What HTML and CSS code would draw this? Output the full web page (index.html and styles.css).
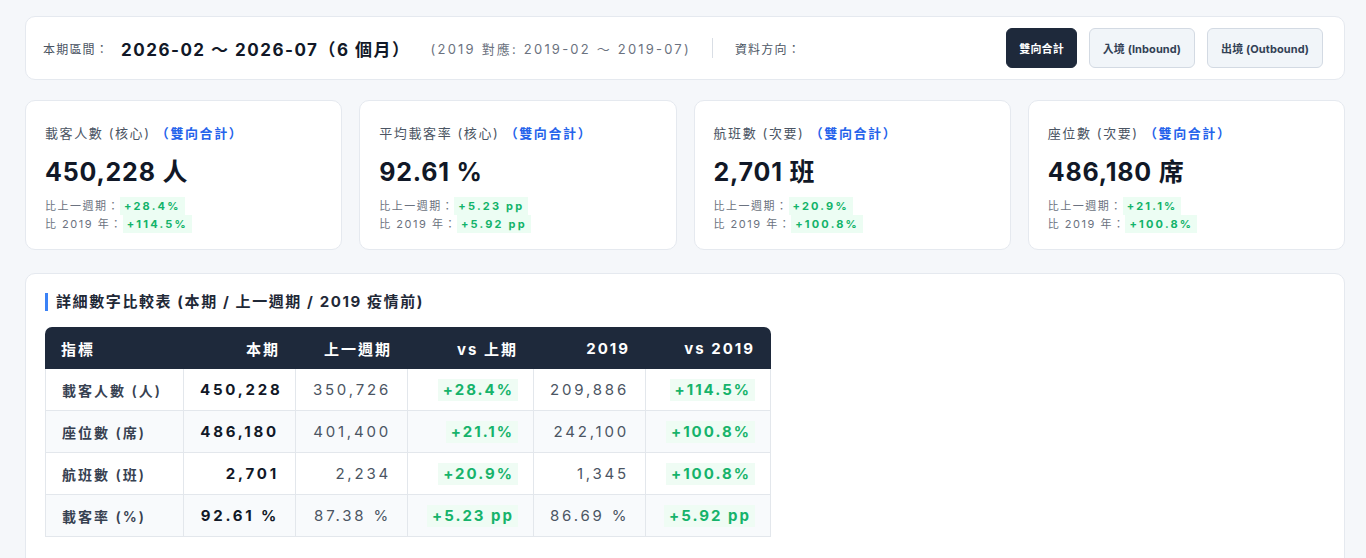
FILE: index.html
```
<!DOCTYPE html>
<html lang="zh-Hant">
<head>
<meta charset="utf-8">
<link rel="stylesheet" href="styles.css">
</head>
<body>
<div class="page">
  <div class="card topbar">
    <span class="lbl">本期區間：</span>
    <span class="period">2026-02 ～ 2026-07（6 個月）</span>
    <span class="cmp">(2019 對應: 2019-02 ～ 2019-07)</span>
    <span class="divider"></span>
    <span class="lbl">資料方向：</span>
    <div class="btns">
      <button class="btn active">雙向合計</button>
      <button class="btn">入境 (Inbound)</button>
      <button class="btn">出境 (Outbound)</button>
    </div>
  </div>

  <div class="kpis">
    <div class="card kpi">
      <div class="kpi-title">載客人數 (核心) <span class="blue">（雙向合計）</span></div>
      <div class="kpi-val">450,228 人</div>
      <div class="kpi-line">比上一週期：<span class="up">+28.4%</span></div>
      <div class="kpi-line">比 2019 年：<span class="up">+114.5%</span></div>
    </div>
    <div class="card kpi">
      <div class="kpi-title">平均載客率 (核心) <span class="blue">（雙向合計）</span></div>
      <div class="kpi-val">92.61 %</div>
      <div class="kpi-line">比上一週期：<span class="up">+5.23 pp</span></div>
      <div class="kpi-line">比 2019 年：<span class="up">+5.92 pp</span></div>
    </div>
    <div class="card kpi">
      <div class="kpi-title">航班數 (次要) <span class="blue">（雙向合計）</span></div>
      <div class="kpi-val">2,701 班</div>
      <div class="kpi-line">比上一週期：<span class="up">+20.9%</span></div>
      <div class="kpi-line">比 2019 年：<span class="up">+100.8%</span></div>
    </div>
    <div class="card kpi">
      <div class="kpi-title">座位數 (次要) <span class="blue">（雙向合計）</span></div>
      <div class="kpi-val">486,180 席</div>
      <div class="kpi-line">比上一週期：<span class="up">+21.1%</span></div>
      <div class="kpi-line">比 2019 年：<span class="up">+100.8%</span></div>
    </div>
  </div>

  <div class="card tablecard">
    <h2 class="sec-title">詳細數字比較表 (本期 / 上一週期 / 2019 疫情前)</h2>
    <table class="cmp-table">
      <colgroup><col class="c1"><col class="c2"><col class="c3"><col class="c4"><col class="c5"><col class="c6"></colgroup>
      <thead>
        <tr><th>指標</th><th>本期</th><th>上一週期</th><th>vs 上期</th><th>2019</th><th>vs 2019</th></tr>
      </thead>
      <tbody>
        <tr><td class="name">載客人數 (人)</td><td class="cur">450,228</td><td class="prev">350,726</td><td class="chg"><span class="up">+28.4%</span></td><td class="prev">209,886</td><td class="chg"><span class="up">+114.5%</span></td></tr>
        <tr><td class="name">座位數 (席)</td><td class="cur">486,180</td><td class="prev">401,400</td><td class="chg"><span class="up">+21.1%</span></td><td class="prev">242,100</td><td class="chg"><span class="up">+100.8%</span></td></tr>
        <tr><td class="name">航班數 (班)</td><td class="cur">2,701</td><td class="prev">2,234</td><td class="chg"><span class="up">+20.9%</span></td><td class="prev">1,345</td><td class="chg"><span class="up">+100.8%</span></td></tr>
        <tr><td class="name">載客率 (%)</td><td class="cur">92.61 %</td><td class="prev">87.38 %</td><td class="chg"><span class="up">+5.23 pp</span></td><td class="prev">86.69 %</td><td class="chg"><span class="up">+5.92 pp</span></td></tr>
      </tbody>
    </table>
  </div>
</div>
</body>
</html>
```

FILE: styles.css
```
* { box-sizing: border-box; }
html, body { margin: 0; padding: 0; }
body {
  background: #f5f7fa;
  font-family: Inter, "Noto Sans CJK TC", sans-serif;
  color: #1f2937;
  overflow: hidden;
}
.page {
  padding: 16px 21px 0 25px;
  display: flex;
  flex-direction: column;
}
.card {
  background: #fff;
  border: 1px solid #e5e9ef;
  border-radius: 10px;
}
.topbar {
  height: 64px;
  display: flex;
  align-items: center;
  padding: 0 21px 0 17px;
}
.lbl {
  font-size: 12px;
  color: #4b5563;
  letter-spacing: 1.2px;
}
.period {
  margin-left: 12px;
  font-size: 17px;
  font-weight: 700;
  color: #111827;
  letter-spacing: 1.5px;
}
.cmp {
  margin-left: 20px;
  font-size: 13px;
  color: #6b7280;
  letter-spacing: 2.2px;
}
.divider {
  width: 1px;
  height: 20px;
  background: #d9dee5;
  margin: 0 22px 0 21px;
}
.btns {
  margin-left: auto;
  display: flex;
  gap: 12px;
}
.btn {
  font-family: Inter, "Noto Sans CJK TC", sans-serif;
  height: 40px;
  padding: 0 13px;
  font-size: 11px;
  font-weight: 700;
  border-radius: 6px;
  border: 1px solid #d3dae3;
  background: #f1f5f9;
  color: #334155;
  letter-spacing: 0.1px;
}
.btn.active {
  padding: 0 12px;
  background: #1e293b;
  border-color: #1e293b;
  color: #fff;
}
.kpis {
  display: grid;
  grid-template-columns: repeat(4, 1fr);
  gap: 17px;
  margin-top: 20px;
}
.kpi {
  height: 150px;
  padding: 22px 19px 0;
}
.kpi-title {
  font-size: 13px;
  color: #4b5563;
  letter-spacing: 1.6px;
  line-height: 20px;
}
.blue { color: #2563eb; font-weight: 700; }
.kpi-val {
  margin-top: 14px;
  font-size: 25px;
  font-weight: 700;
  color: #111827;
  letter-spacing: 0.8px;
  line-height: 30px;
  margin-bottom: 10px;
}
.kpi-line {
  font-size: 11px;
  color: #6b7280;
  letter-spacing: 1.5px;
  line-height: 18px;
}
.kpi-line .up {
  display: inline-block;
  background: #ecfdf3;
  color: #12b36a;
  font-weight: 700;
  padding: 0 4px;
  line-height: 18px;
  letter-spacing: 2.2px;
}
.tablecard {
  margin-top: 23px;
  padding: 19px 19px 20px;
  height: 320px;
}
.sec-title {
  margin: 0 0 16px;
  font-size: 15px;
  font-weight: 700;
  color: #1f2937;
  letter-spacing: 1.6px;
  border-left: 3px solid #3b82f6;
  padding-left: 8px;
  line-height: 18px;
}
.cmp-table {
  border-collapse: separate;
  border-spacing: 0;
  font-size: 15px;
  letter-spacing: 2.8px;
  table-layout: fixed;
  width: 726px;
  white-space: nowrap;
}
.cmp-table th {
  background: #1e293b;
  color: #fff;
  font-weight: 700;
  height: 42px;
  text-align: right;
  padding: 0 16px;
  letter-spacing: 2px;
}
.cmp-table th:first-child { text-align: left; border-top-left-radius: 7px; }
.cmp-table th:last-child { border-top-right-radius: 7px; }
.c1 { width: 139px; }
.c2 { width: 112px; }
.c3 { width: 112px; }
.c4 { width: 126px; }
.c5 { width: 112px; }
.c6 { width: 125px; }
.cmp-table td {
  height: 42px;
  padding: 0 16px;
  text-align: right;
  border-right: 1px solid #e3e7ec;
  border-bottom: 1px solid #e3e7ec;
}
.cmp-table td:first-child { border-left: 1px solid #e3e7ec; text-align: left; }
.cmp-table tbody tr:nth-child(even) td { background: #f8fafc; }
.name { color: #374151; font-weight: 600; font-size: 14px; letter-spacing: 2px; }
.cur { color: #111827; font-weight: 700; }
.prev { color: #4b5563; }
.cmp-table td.chg { padding-right: 15px; }
.chg .up {
  display: inline-block;
  background: #effcf4;
  color: #16b36b;
  font-weight: 700;
  padding: 0 4px 0 5px;
  line-height: 22px;
  letter-spacing: 2px;
}
```
